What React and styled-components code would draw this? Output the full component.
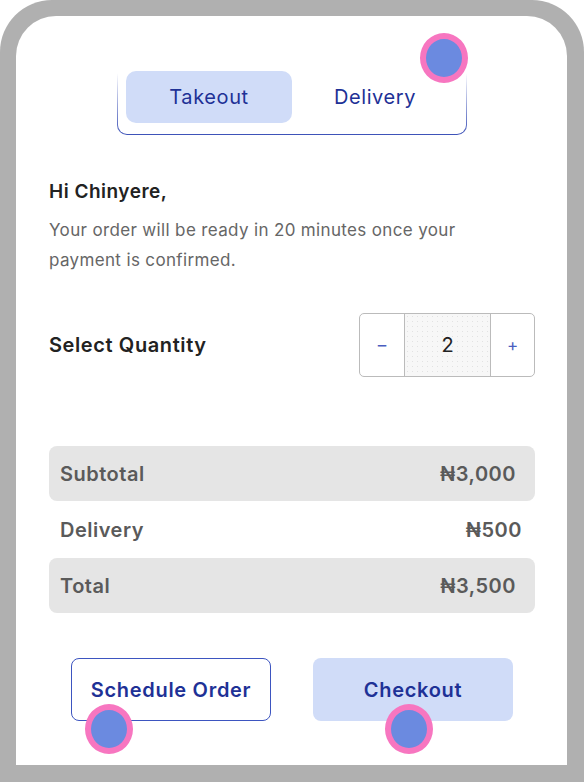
import React from 'react';
import styled, { createGlobalStyle } from 'styled-components';

const Global = createGlobalStyle`
	body {
		margin: 0;
		background: #fff;
		font-family: Inter, "Noto Sans", "DejaVu Sans", sans-serif;
	}
`

const Frame = styled.div`
	position: relative;
	width: 584px;
	height: 782px;
	box-sizing: border-box;
	padding: 16px 17px 17px 16px;
	background: #b0b0b0;
	border-radius: 52px 52px 0 0;
`
const Screen = styled.div`
	height: 100%;
	box-sizing: border-box;
	background: #fff;
	border-radius: 40px 40px 0 0;
	padding: 46px 32px 0 33px;
	display: flex;
	flex-direction: column;
`
const Toggle = styled.div`
	align-self: center;
	width: 350px;
	box-sizing: border-box;
	padding: 8px 8px 11px;
	display: flex;
	border: 1.5px solid transparent;
	border-radius: 10px;
	background:
		linear-gradient(#fff, #fff) padding-box,
		linear-gradient(to bottom, rgba(61, 82, 184, 0) 15%, #3d52b8 100%) border-box;
`
const Tab = styled.div`
	flex: 1;
	height: 52px;
	display: flex;
	align-items: center;
	justify-content: center;
	border-radius: 10px;
	font-size: 20px;
	letter-spacing: 0.6px;
	color: #1e3196;
	background: ${p => (p.$active ? '#d0dcf8' : 'transparent')};
`
const Greeting = styled.h2`
	margin: 45px 0 0;
	font-size: 19px;
	font-weight: 600;
	letter-spacing: 0.5px;
	color: #222;
`
const Message = styled.p`
	margin: 12px 0 0;
	max-width: 470px;
	font-size: 17px;
	letter-spacing: 0.35px;
	line-height: 30px;
	color: #666;
`
const QtyRow = styled.div`
	margin-top: 38px;
	display: flex;
	align-items: center;
	justify-content: space-between;
`
const QtyLabel = styled.span`
	font-size: 20px;
	font-weight: 600;
	letter-spacing: 0.6px;
	color: #222;
`
const Stepper = styled.div`
	display: grid;
	grid-template-columns: 44px 87px 43px;
	height: 62px;
	border: 1px solid #bbb;
	border-radius: 5px;
	overflow: hidden;
`
const StepButton = styled.div`
	display: flex;
	align-items: center;
	justify-content: center;
	font-size: 17px;
	color: #4a5ec0;
`
const StepValue = styled.div`
	display: flex;
	align-items: center;
	justify-content: center;
	border-left: 1px solid #bbb;
	border-right: 1px solid #bbb;
	background-color: #f7f7f7;
	background-image: radial-gradient(#e2e2e2 0.6px, transparent 0.8px);
	background-size: 5px 5px;
	font-size: 20px;
	color: #222;
`
const Summary = styled.div`
	margin-top: 69px;
	display: flex;
	flex-direction: column;
	gap: 1px;
`
const Line = styled.div`
	height: 55px;
	display: flex;
	align-items: center;
	justify-content: space-between;
	padding: 0 ${p => (p.$shaded ? '19px' : '13px')} 0 11px;
	border-radius: 8px;
	background: ${p => (p.$shaded ? '#e5e5e5' : 'transparent')};
	font-size: 20px;
	font-weight: 600;
	letter-spacing: 0.5px;
	color: #5a5a5a;
`
const Actions = styled.div`
	margin-top: 45px;
	display: flex;
	gap: 42px;
	padding-left: 22px;
`
const Button = styled.div`
	width: 200px;
	height: 63px;
	box-sizing: border-box;
	display: flex;
	align-items: center;
	justify-content: center;
	border-radius: 8px;
	font-size: 20px;
	font-weight: 600;
	letter-spacing: 0.7px;
	color: #1e3196;
	border: ${p => (p.$primary ? 'none' : '1px solid #3d55c0')};
	background: ${p => (p.$primary ? '#d0dcf8' : '#fff')};
`
const Touch = styled.div`
	position: absolute;
	width: 36px;
	height: 38px;
	border: 6px solid #f776c0;
	border-radius: 50%;
	background: #6b8ae0;
	transform: translate(-50%, -50%);
`

const lines = [
	{ label: 'Subtotal', value: '₦3,000', shaded: true },
	{ label: 'Delivery', value: '₦500' },
	{ label: 'Total', value: '₦3,500', shaded: true },
]

const touches = [
	[444, 58],
	[109, 729],
	[409, 729],
]

export default function App() {
	return (
		<>
			<Global />
			<Frame>
				<Screen>
					<Toggle>
						<Tab $active>Takeout</Tab>
						<Tab>Delivery</Tab>
					</Toggle>
					<Greeting>Hi Chinyere,</Greeting>
					<Message>Your order will be ready in 20 minutes once your payment is confirmed.</Message>
					<QtyRow>
						<QtyLabel>Select Quantity</QtyLabel>
						<Stepper>
							<StepButton>–</StepButton>
							<StepValue>2</StepValue>
							<StepButton>+</StepButton>
						</Stepper>
					</QtyRow>
					<Summary>
						{lines.map(l => (
							<Line key={l.label} $shaded={l.shaded}>
								<span>{l.label}</span>
								<span>{l.value}</span>
							</Line>
						))}
					</Summary>
					<Actions>
						<Button>Schedule Order</Button>
						<Button $primary>Checkout</Button>
					</Actions>
				</Screen>
				{touches.map(([x, y]) => (
					<Touch key={x} style={{ left: x, top: y }} />
				))}
			</Frame>
		</>
	)
}
